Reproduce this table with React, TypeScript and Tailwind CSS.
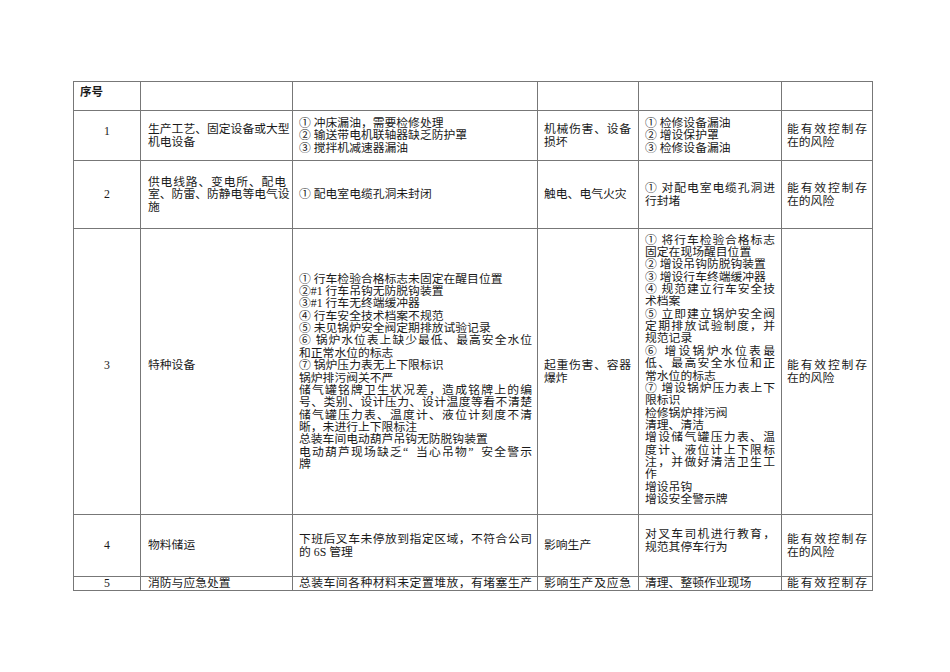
import React from "react";

type Ln = string; // prefix "^" = justified (full) line

const fontStack = { fontFamily: '"Liberation Serif", "Noto Sans CJK SC", serif' };
const cjk = { fontFamily: '"Noto Sans CJK SC", sans-serif' };

function renderText(t: string) {
  const parts = t.split(/([“”])/);
  return parts.map((p, i) =>
    p === "“" ? (
      <span key={i} className="inline-block w-[1em] text-right">
        {p}
      </span>
    ) : p === "”" ? (
      <span key={i} className="inline-block w-[1em] text-left">
        {p}
      </span>
    ) : (
      <React.Fragment key={i}>{p}</React.Fragment>
    )
  );
}

function Lines({ lines }: { lines: Ln[] }) {
  return (
    <>
      {lines.map((l, i) => {
        const j = l.startsWith("^");
        const t = j ? l.slice(1) : l;
        return (
          <div
            key={i}
            className={
              j
                ? "text-justify [text-align-last:justify] whitespace-nowrap"
                : "whitespace-nowrap"
            }
          >
            {t === "" ? "\u00a0" : renderText(t)}
          </div>
        );
      })}
    </>
  );
}

function C({ lines, cls = "" }: { lines: Ln[]; cls?: string }) {
  return (
    <div
      className={
        "flex flex-col justify-center overflow-hidden border-r border-b border-[#777] " +
        cls
      }
    >
      <Lines lines={lines} />
    </div>
  );
}

function Num({ n, cls = "" }: { n: string; cls?: string }) {
  return (
    <div
      className={
        "flex flex-col justify-center items-center overflow-hidden border-r border-b border-[#777] " +
        cls
      }
    >
      <div>{n}</div>
    </div>
  );
}

const col2 = "pl-[7px] pr-[6px]";
const col3 = "pl-[6px] pr-[5px]";
const col4 = "pl-[6px] pr-[7px]";
const col5 = "pl-[6px] pr-[6px]";
const col6 = "pl-[5px] pr-[5px]";

export default function App() {
  return (
    <div className="w-[950px] h-[672px] overflow-hidden bg-white pt-[81px] pl-[73px]">
      <div
        style={fontStack}
        className="grid w-[800px] grid-cols-[67px_152px_245px_101px_143px_91px] grid-rows-[29px_50px_68px_286px_62px_14px] border-l border-t border-[#777] text-[11.8px] leading-[12.35px] text-[#1a1a1a]"
      >
        {/* header */}
        <div className="border-r border-b border-[#777] pl-[6px] pt-[3px]">
          <span className="font-bold text-[11.5px]" style={cjk}>
            序号
          </span>
        </div>
        <div className="border-r border-b border-[#777]" />
        <div className="border-r border-b border-[#777]" />
        <div className="border-r border-b border-[#777]" />
        <div className="border-r border-b border-[#777]" />
        <div className="border-r border-b border-[#777]" />

        {/* row 1 */}
        <Num n="1" cls="pb-[8px]" />
        <C cls={col2} lines={["生产工艺、固定设备或大型", "机电设备"]} />
        <C
          cls={col3}
          lines={["① 冲床漏油，需要检修处理", "② 输送带电机联轴器缺乏防护罩", "③ 搅拌机减速器漏油"]}
        />
        <C cls={col4} lines={["^机械伤害、设备", "损坏"]} />
        <C cls={col5} lines={["① 检修设备漏油", "② 增设保护罩", "③ 检修设备漏油"]} />
        <C cls={col6} lines={["^能有效控制存", "在的风险"]} />

        {/* row 2 */}
        <Num n="2" />
        <C cls={col2} lines={["^供电线路、变电所、配电", "^室、防雷、防静电等电气设", "施"]} />
        <C cls={col3} lines={["① 配电室电缆孔洞未封闭"]} />
        <C cls={col4} lines={["触电、电气火灾"]} />
        <C cls={col5} lines={["^① 对配电室电缆孔洞进", "行封堵"]} />
        <C cls={col6} lines={["^能有效控制存", "在的风险"]} />

        {/* row 3 */}
        <Num n="3" cls="pb-[12px]" />
        <C cls={col2 + " pb-[12px]"} lines={["特种设备"]} />
        <C
          cls={col3}
          lines={[
            "① 行车检验合格标志未固定在醒目位置",
            "②#1 行车吊钩无防脱钩装置",
            "③#1 行车无终端缓冲器",
            "④ 行车安全技术档案不规范",
            "⑤ 未见锅炉安全阀定期排放试验记录",
            "^⑥ 锅炉水位表上缺少最低、最高安全水位",
            "和正常水位的标志",
            "⑦ 锅炉压力表无上下限标识",
            "锅炉排污阀关不严",
            "^储气罐铭牌卫生状况差，造成铭牌上的编",
            "^号、类别、设计压力、设计温度等看不清楚",
            "^储气罐压力表、温度计、液位计刻度不清",
            "晰，未进行上下限标注",
            "总装车间电动葫芦吊钩无防脱钩装置",
            "^电动葫芦现场缺乏“当心吊物”安全警示",
            "牌",
          ]}
        />
        <C cls={col4} lines={["^起重伤害、容器", "爆炸"]} />
        <C
          cls={col5 + " pb-[4px]"}
          lines={[
            "^① 将行车检验合格标志",
            "固定在现场醒目位置",
            "② 增设吊钩防脱钩装置",
            "③ 增设行车终端缓冲器",
            "^④ 规范建立行车安全技",
            "术档案",
            "^⑤ 立即建立锅炉安全阀",
            "^定期排放试验制度，并",
            "规范记录",
            "^⑥ 增设锅炉水位表最",
            "^低、最高安全水位和正",
            "常水位的标志",
            "^⑦ 增设锅炉压力表上下",
            "限标识",
            "检修锅炉排污阀",
            "清理、清洁",
            "^增设储气罐压力表、温",
            "^度计、液位计上下限标",
            "^注，并做好清洁卫生工",
            "作",
            "增设吊钩",
            "增设安全警示牌",
          ]}
        />
        <C cls={col6} lines={["^能有效控制存", "在的风险"]} />

        {/* row 4 */}
        <Num n="4" />
        <C cls={col2} lines={["物料储运"]} />
        <C cls={col3} lines={["^下班后叉车未停放到指定区域，不符合公司", "的 6S 管理"]} />
        <C cls={col4} lines={["影响生产"]} />
        <C cls={col5 + " pb-[10px]"} lines={["^对叉车司机进行教育，", "规范其停车行为"]} />
        <C cls={col6} lines={["^能有效控制存", "在的风险"]} />

        {/* row 5 */}
        <Num n="5" />
        <C cls={col2} lines={["消防与应急处置"]} />
        <C cls={col3} lines={["^总装车间各种材料未定置堆放，有堵塞生产"]} />
        <C cls={col4} lines={["^影响生产及应急"]} />
        <C cls={col5} lines={["清理、整顿作业现场"]} />
        <C cls={col6} lines={["^能有效控制存"]} />
      </div>
    </div>
  );
}
